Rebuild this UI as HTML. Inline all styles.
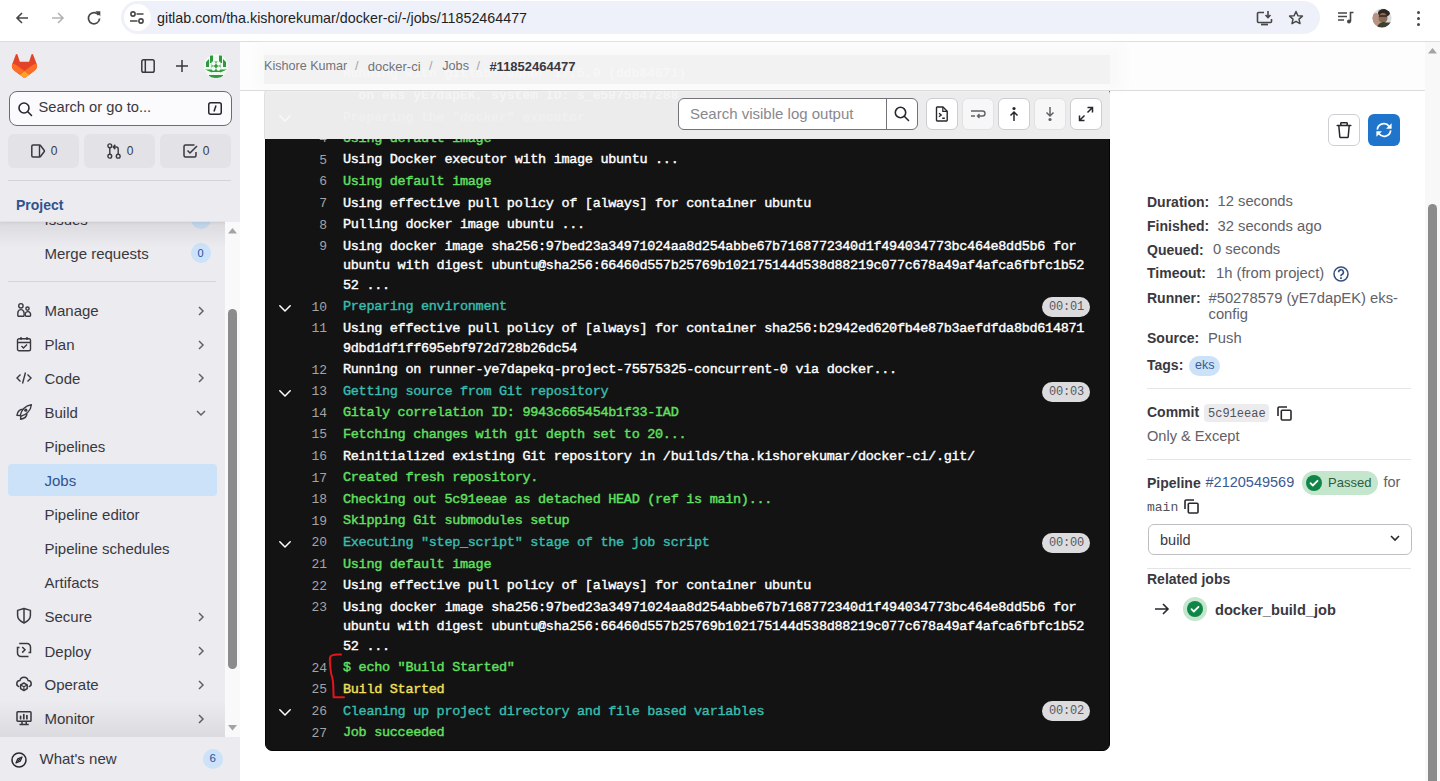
<!DOCTYPE html>
<html><head><meta charset="utf-8">
<style>
*{box-sizing:border-box;margin:0;padding:0}
html,body{width:1440px;height:781px;overflow:hidden;background:#fff;font-family:"Liberation Sans",sans-serif;color:#3a383f}
.a{position:absolute}
.t{position:absolute;white-space:pre}
svg{overflow:visible}
</style></head>
<body>
<div class="a" style="left:0px;top:0px;width:1440px;height:41px;background:#fff"></div>
<div class="a" style="left:0px;top:41px;width:1440px;height:1px;background:#dedede"></div>
<div class="a" style="left:121px;top:1px;width:1199px;height:33px;background:#eef1f9;border-radius:17px"></div>
<div class="a" style="left:124px;top:4px;width:27px;height:27px;background:#fff;border-radius:50%"></div>
<svg class="a" style="left:14px;top:10px;" width="16" height="16" viewBox="0 0 16 16"><path d="M14 8H3M8 3L3 8l5 5" fill="none" stroke="#474747" stroke-width="1.6"/></svg>
<svg class="a" style="left:50px;top:10px;" width="16" height="16" viewBox="0 0 16 16"><path d="M2 8h11M8 3l5 5-5 5" fill="none" stroke="#b4b4b4" stroke-width="1.6"/></svg>
<svg class="a" style="left:86px;top:10px;" width="16" height="16" viewBox="0 0 16 16"><path d="M12.6 5A5.6 5.6 0 1 0 13.6 8.5" fill="none" stroke="#474747" stroke-width="1.7"/><path d="M9.3 1.3h5v5z" fill="#474747"/></svg>
<svg class="a" style="left:130px;top:11px;" width="14" height="13" viewBox="0 0 14 13"><circle cx="3" cy="3" r="2.1" fill="none" stroke="#474747" stroke-width="1.6"/><path d="M6.5 3h7M0 10h7.5" stroke="#474747" stroke-width="1.6"/><circle cx="11" cy="10" r="2.1" fill="none" stroke="#474747" stroke-width="1.6"/></svg>
<div class="t " style="left:157px;top:11.40px;font-size:14.3px;line-height:14.3px;font-weight:400;color:#1f1f1f;font-family:'Liberation Sans',sans-serif;">gitlab.com/tha.kishorekumar/docker-ci/-/jobs/11852464477</div>
<svg class="a" style="left:1256px;top:11px;" width="17" height="15" viewBox="0 0 17 15"><path d="M8 1.5H2.5a1 1 0 0 0-1 1v8a1 1 0 0 0 1 1h12a1 1 0 0 0 1-1V8" fill="none" stroke="#474747" stroke-width="1.6"/><path d="M12 0v6M9.5 4l2.5 2.5L14.5 4" fill="none" stroke="#474747" stroke-width="1.6"/><path d="M5 13.5h7" stroke="#474747" stroke-width="1.8"/></svg>
<svg class="a" style="left:1288px;top:10px;" width="16" height="16" viewBox="0 0 16 16"><path d="M8 1.5l1.9 4.2 4.5.4-3.4 3 1 4.5L8 11.3l-4 2.3 1-4.5-3.4-3 4.5-.4z" fill="none" stroke="#474747" stroke-width="1.5" stroke-linejoin="round"/></svg>
<svg class="a" style="left:1338px;top:11px;" width="17" height="13" viewBox="0 0 17 13"><path d="M0 2h9M0 5.5h9M0 9h6" stroke="#474747" stroke-width="1.6"/><path d="M12.5 10.5V1.5h3" fill="none" stroke="#474747" stroke-width="1.6"/><circle cx="11" cy="10.5" r="2" fill="#474747"/></svg>
<svg class="a" style="left:1372px;top:8px;" width="20" height="20" viewBox="0 0 20 20"><defs><clipPath id="ca"><circle cx="10" cy="10" r="9.6"/></clipPath></defs><g clip-path="url(#ca)"><rect width="20" height="20" fill="#dcdcdc"/><ellipse cx="4" cy="13" rx="5" ry="8" fill="#b89383"/><ellipse cx="12" cy="5" rx="6" ry="4" fill="#2e2620"/><ellipse cx="11" cy="10" rx="4.5" ry="5" fill="#8a6a50"/><path d="M4 20Q8 13 12 14T20 14V20z" fill="#3b4030"/><path d="M7 8h8" stroke="#2e2620" stroke-width="1.3"/></g></svg>
<div class="a" style="left:1416.5px;top:10.5px;width:3.5px;height:3.5px;background:#474747;border-radius:50%"></div>
<div class="a" style="left:1416.5px;top:16.5px;width:3.5px;height:3.5px;background:#474747;border-radius:50%"></div>
<div class="a" style="left:1416.5px;top:22.5px;width:3.5px;height:3.5px;background:#474747;border-radius:50%"></div>
<div class="a" style="left:0px;top:42px;width:240px;height:739px;background:#ebebf0"></div>
<div class="a" style="left:0;top:222px;width:225px;height:515px;overflow:hidden">
<div class="t " style="left:44.5px;top:-10.20px;font-size:15px;line-height:15px;font-weight:400;color:#3a383f;font-family:'Liberation Sans',sans-serif;">Issues</div>
<div class="a" style="left:191px;top:-13px;width:20px;height:20px;background:#cbe2f9;border-radius:50%"></div>
<div class="t " style="left:44.5px;top:24.00px;font-size:15px;line-height:15px;font-weight:400;color:#3a383f;font-family:'Liberation Sans',sans-serif;">Merge requests</div>
<div class="a" style="left:191px;top:21px;width:20px;height:20px;background:#cbe2f9;border-radius:50%"></div>
<div class="t " style="left:197.5px;top:25.89px;font-size:11px;line-height:11px;font-weight:400;color:#28529d;font-family:'Liberation Sans',sans-serif;">0</div>
<div class="a" style="left:8px;top:59px;width:208px;height:1px;background:#d4d4d9"></div>
<div class="t " style="left:44.5px;top:81.10px;font-size:15px;line-height:15px;font-weight:400;color:#3a383f;font-family:'Liberation Sans',sans-serif;">Manage</div>
<svg class="a" style="left:198px;top:83.80000000000001px;" width="6" height="10" viewBox="0 0 6 10"><path d="M1 1l4 4-4 4" fill="none" stroke="#626168" stroke-width="1.5"/></svg>
<div class="t " style="left:44.5px;top:114.90px;font-size:15px;line-height:15px;font-weight:400;color:#3a383f;font-family:'Liberation Sans',sans-serif;">Plan</div>
<svg class="a" style="left:198px;top:117.60000000000002px;" width="6" height="10" viewBox="0 0 6 10"><path d="M1 1l4 4-4 4" fill="none" stroke="#626168" stroke-width="1.5"/></svg>
<div class="t " style="left:44.5px;top:148.70px;font-size:15px;line-height:15px;font-weight:400;color:#3a383f;font-family:'Liberation Sans',sans-serif;">Code</div>
<svg class="a" style="left:198px;top:151.39999999999998px;" width="6" height="10" viewBox="0 0 6 10"><path d="M1 1l4 4-4 4" fill="none" stroke="#626168" stroke-width="1.5"/></svg>
<div class="t " style="left:44.5px;top:182.50px;font-size:15px;line-height:15px;font-weight:400;color:#3a383f;font-family:'Liberation Sans',sans-serif;">Build</div>
<svg class="a" style="left:196px;top:188.2px;" width="10" height="6" viewBox="0 0 10 6"><path d="M1 1l4 4 4-4" fill="none" stroke="#626168" stroke-width="1.5"/></svg>
<svg class="a" style="left:16px;top:80px;" width="16" height="16" viewBox="0 0 16 16"><g fill="none" stroke="#3a383f" stroke-width="1.4"><circle cx="4.9" cy="3.8" r="2.2"/><path d="M1.8 13.2C1.6 10.5 2 7.6 4.9 7.6 7.8 7.6 8.3 10.5 8.1 13.2A1 1 0 0 1 7.1 14.3H2.8A1 1 0 0 1 1.8 13.2z"/><circle cx="11.5" cy="6.6" r="1.6"/><path d="M9.3 13.3C9.1 11.5 9.6 9.6 11.8 9.6 14 9.6 14.8 11.5 14.6 13.3A1 1 0 0 1 13.6 14.3H10.3A1 1 0 0 1 9.3 13.3z"/></g></svg>
<svg class="a" style="left:16px;top:114px;" width="16" height="16" viewBox="0 0 16 16"><rect x="1.5" y="2.8" width="13" height="12" rx="1.5" fill="none" stroke="#3a383f" stroke-width="1.4"/><path d="M1.5 6.5h13M5 1v3M11 1v3M5.5 10l2 2 3.5-3.5" fill="none" stroke="#3a383f" stroke-width="1.4"/></svg>
<svg class="a" style="left:16px;top:148px;" width="16" height="16" viewBox="0 0 16 16"><path d="M4.5 4.5L1 8l3.5 3.5M11.5 4.5L15 8l-3.5 3.5M9.5 2.5l-3 11" fill="none" stroke="#3a383f" stroke-width="1.4"/></svg>
<svg class="a" style="left:16px;top:182px;" width="16" height="16" viewBox="0 0 16 16"><g fill="none" stroke="#3a383f" stroke-width="1.4" stroke-linejoin="round"><path d="M4.2 11.6C5.2 6 9.6 1.4 15.4 0.7 14.8 6.4 10.4 11 4.8 12.2z"/><path d="M6.8 5.2C3.8 5.2 1.6 7.4 0.9 11.3L4.2 11.6"/><path d="M4.8 12.2L4.6 15.2C8.6 14.8 10.8 12.6 11 9.4"/></g><circle cx="9.8" cy="6.2" r="1.6" fill="#3a383f"/></svg>
<div class="t " style="left:44.5px;top:217.20px;font-size:15px;line-height:15px;font-weight:400;color:#3a383f;font-family:'Liberation Sans',sans-serif;">Pipelines</div>
<div class="a" style="left:8px;top:242px;width:209px;height:31.5px;background:#cbe2f9;border-radius:4px"></div>
<div class="t " style="left:44.5px;top:251.10px;font-size:15px;line-height:15px;font-weight:400;color:#30538f;font-family:'Liberation Sans',sans-serif;">Jobs</div>
<div class="t " style="left:44.5px;top:285.20px;font-size:15px;line-height:15px;font-weight:400;color:#3a383f;font-family:'Liberation Sans',sans-serif;">Pipeline editor</div>
<div class="t " style="left:44.5px;top:319.10px;font-size:15px;line-height:15px;font-weight:400;color:#3a383f;font-family:'Liberation Sans',sans-serif;">Pipeline schedules</div>
<div class="t " style="left:44.5px;top:352.70px;font-size:15px;line-height:15px;font-weight:400;color:#3a383f;font-family:'Liberation Sans',sans-serif;">Artifacts</div>
<div class="t " style="left:44.5px;top:387.30px;font-size:15px;line-height:15px;font-weight:400;color:#3a383f;font-family:'Liberation Sans',sans-serif;">Secure</div>
<svg class="a" style="left:198px;top:390px;" width="6" height="10" viewBox="0 0 6 10"><path d="M1 1l4 4-4 4" fill="none" stroke="#626168" stroke-width="1.5"/></svg>
<div class="t " style="left:44.5px;top:421.60px;font-size:15px;line-height:15px;font-weight:400;color:#3a383f;font-family:'Liberation Sans',sans-serif;">Deploy</div>
<svg class="a" style="left:198px;top:424.29999999999995px;" width="6" height="10" viewBox="0 0 6 10"><path d="M1 1l4 4-4 4" fill="none" stroke="#626168" stroke-width="1.5"/></svg>
<div class="t " style="left:44.5px;top:455.20px;font-size:15px;line-height:15px;font-weight:400;color:#3a383f;font-family:'Liberation Sans',sans-serif;">Operate</div>
<svg class="a" style="left:198px;top:457.9px;" width="6" height="10" viewBox="0 0 6 10"><path d="M1 1l4 4-4 4" fill="none" stroke="#626168" stroke-width="1.5"/></svg>
<div class="t " style="left:44.5px;top:489.30px;font-size:15px;line-height:15px;font-weight:400;color:#3a383f;font-family:'Liberation Sans',sans-serif;">Monitor</div>
<svg class="a" style="left:198px;top:492px;" width="6" height="10" viewBox="0 0 6 10"><path d="M1 1l4 4-4 4" fill="none" stroke="#626168" stroke-width="1.5"/></svg>
<svg class="a" style="left:16px;top:385px;" width="16" height="16" viewBox="0 0 16 16"><path d="M8 1.5L1.6 3.4V8.6C1.6 11.6 4.4 14.4 8 16 11.6 14.4 14.4 11.6 14.4 8.6V3.4z" fill="none" stroke="#3a383f" stroke-width="1.5" stroke-linejoin="round"/><path d="M8 1.8v14" stroke="#3a383f" stroke-width="1.5"/></svg>
<svg class="a" style="left:16px;top:420px;" width="16" height="16" viewBox="0 0 16 16"><path d="M3.2 1.5H11A3.5 3.5 0 0 1 14.5 5V10.5H12.5M3.5 5.5H1.5V11A3.5 3.5 0 0 0 5 14.5H12.5" fill="none" stroke="#3a383f" stroke-width="1.5"/><path d="M6.2 5L9 7.8 6.2 10.6" fill="none" stroke="#3a383f" stroke-width="1.5"/></svg>
<svg class="a" style="left:16px;top:454px;" width="16" height="16" viewBox="0 0 16 16"><path d="M2.8 10.6A3.1 3.1 0 0 1 3.9 4.6 4.2 4.2 0 0 1 12.1 4.6 3.1 3.1 0 0 1 13.2 10.6" fill="none" stroke="#3a383f" stroke-width="1.5" stroke-linecap="round"/><path d="M7.9 7L11.2 8.9V12.6L7.9 14.5 4.6 12.6V8.9z" fill="none" stroke="#3a383f" stroke-width="1.5" stroke-linejoin="round"/><path d="M7.9 10.8V14.3M7.9 10.8L4.8 9M7.9 10.8L11 9" fill="none" stroke="#3a383f" stroke-width="1.2"/></svg>
<svg class="a" style="left:16px;top:488px;" width="16" height="16" viewBox="0 0 16 16"><rect x="1" y="1.7" width="14" height="9.6" rx="0.8" fill="none" stroke="#3a383f" stroke-width="1.5"/><path d="M6 11.5v2.6M10.2 11.5v2.6M3.5 14.6h9.2" fill="none" stroke="#3a383f" stroke-width="1.5"/><path d="M4.6 6.3v2.4M7.8 4.7v4M10.9 5.6v3.1" stroke="#3a383f" stroke-width="1.7" stroke-linecap="round"/></svg>
<div class="a" style="left:0px;top:0px;width:225px;height:26px;background:linear-gradient(to bottom,rgba(0,0,0,0.075),rgba(0,0,0,0))"></div>
<div class="a" style="left:0px;top:478px;width:225px;height:37px;background:linear-gradient(to bottom,rgba(0,0,0,0),rgba(0,0,0,0.07))"></div>
</div>
<div class="a" style="left:0px;top:42px;width:240px;height:180px;background:#ebebf0;box-shadow:0 1px 3px rgba(0,0,0,0.06)"></div>
<div class="a" style="left:0px;top:221px;width:225px;height:1px;background:rgba(0,0,0,0.04)"></div>
<svg class="a" style="left:12px;top:54px;" width="25" height="24" viewBox="0 0 25 24"><path d="m24.507 9.5-.034-.09L21.082.562a.896.896 0 0 0-1.694.091l-2.29 7.01H7.825L5.535.653a.898.898 0 0 0-1.694-.09L.451 9.411.416 9.5a6.297 6.297 0 0 0 2.09 7.278l.012.01.03.022 5.16 3.867 2.56 1.935 1.554 1.176a1.051 1.051 0 0 0 1.268 0l1.555-1.176 2.56-1.935 5.197-3.89.014-.01A6.297 6.297 0 0 0 24.507 9.5Z" fill="#E24329"/><path d="m24.507 9.5-.034-.09a11.44 11.44 0 0 0-4.56 2.051l-7.447 5.632 4.742 3.584 5.197-3.89.014-.01A6.297 6.297 0 0 0 24.507 9.5Z" fill="#FC6D26"/><path d="m7.707 20.677 2.56 1.935 1.555 1.176a1.051 1.051 0 0 0 1.268 0l1.555-1.176 2.56-1.935-4.743-3.584-4.755 3.584Z" fill="#FCA326"/><path d="M5.01 11.461a11.43 11.43 0 0 0-4.56-2.05L.416 9.5a6.297 6.297 0 0 0 2.09 7.278l.012.01.03.022 5.16 3.867 4.745-3.584-7.444-5.632Z" fill="#FC6D26"/></svg>
<svg class="a" style="left:141px;top:59px;" width="14" height="14" viewBox="0 0 14 14"><rect x="0.8" y="0.8" width="12.4" height="12.4" rx="1.8" fill="none" stroke="#3a383f" stroke-width="1.5"/><path d="M4.3 1v12" stroke="#3a383f" stroke-width="1.5"/></svg>
<svg class="a" style="left:176px;top:60px;" width="12" height="12" viewBox="0 0 12 12"><path d="M6 0v12M0 6h12" stroke="#3a383f" stroke-width="1.5"/></svg>
<svg class="a" style="left:204px;top:54px;" width="24" height="24" viewBox="0 0 24 24"><defs><clipPath id="av"><circle cx="12" cy="12" r="12"/></clipPath></defs><g clip-path="url(#av)"><rect width="24" height="24" fill="#f1faf0"/><g fill="#2e9a3f"><path d="M6 1.5h3v7.5H6zM15 1.5h3v7.5h-3zM2 13V8l3-3v8zM22 13V8l-3-3v8zM9 9h6v6H9zM1 15.5h7v3zM23 15.5h-7v3zM8 15h8v3H8zM5 21h14v3H5z"/></g><g fill="#f1faf0"><circle cx="12" cy="12" r="0"/></g><path d="M7.5 7.5h9v9h-9z" fill="#2e9a3f"/><circle cx="9.5" cy="9.5" r="2.2" fill="#f1faf0"/><circle cx="14.5" cy="9.5" r="2.2" fill="#f1faf0"/><circle cx="9.5" cy="14.5" r="2.2" fill="#f1faf0"/><circle cx="14.5" cy="14.5" r="2.2" fill="#f1faf0"/><circle cx="12" cy="12" r="1.6" fill="#2e9a3f"/></g></svg>
<div class="a" style="left:8.5px;top:90.5px;width:223px;height:35px;background:#fbfafd;border:1px solid #6e6c73;border-radius:8px"></div>
<svg class="a" style="left:18px;top:102px;" width="14" height="14" viewBox="0 0 14 14"><circle cx="6" cy="6" r="5" fill="none" stroke="#28272d" stroke-width="1.6"/><path d="M9.8 9.8L13.5 13.5" stroke="#28272d" stroke-width="1.6" stroke-linecap="round"/></svg>
<div class="t " style="left:38.5px;top:100.36px;font-size:14.7px;line-height:14.7px;font-weight:400;color:#3a383f;font-family:'Liberation Sans',sans-serif;">Search or go to...</div>
<svg class="a" style="left:208px;top:101.5px;" width="14" height="13" viewBox="0 0 14 13"><rect x="0.75" y="0.75" width="12.5" height="11.5" rx="2" fill="none" stroke="#28272d" stroke-width="1.5"/><path d="M8 3.5L6 9.5" stroke="#28272d" stroke-width="1.5"/></svg>
<div class="a" style="left:8px;top:134px;width:71px;height:33.5px;background:#e2e2e7;border-radius:6px"></div>
<div class="a" style="left:84px;top:134px;width:71px;height:33.5px;background:#e2e2e7;border-radius:6px"></div>
<div class="a" style="left:160px;top:134px;width:71px;height:33.5px;background:#e2e2e7;border-radius:6px"></div>
<svg class="a" style="left:31px;top:144px;" width="14" height="14" viewBox="0 0 14 14"><path d="M2 1h6.5a1.2 1.2 0 0 1 1 .5L13.3 6.5a1 1 0 0 1 0 1L9.5 12.5a1.2 1.2 0 0 1-1 .5H2A1.2 1.2 0 0 1 .8 11.8V2.2A1.2 1.2 0 0 1 2 1z" fill="none" stroke="#3a383f" stroke-width="1.5" stroke-linejoin="round"/><path d="M8.5 1.3v11.4" stroke="#3a383f" stroke-width="1.4"/></svg>
<div class="t " style="left:50.8px;top:144.54px;font-size:12px;line-height:12px;font-weight:400;color:#3a383f;font-family:'Liberation Sans',sans-serif;">0</div>
<svg class="a" style="left:107px;top:143px;" width="14" height="16" viewBox="0 0 14 16"><circle cx="2.8" cy="2.8" r="1.9" fill="none" stroke="#3a383f" stroke-width="1.4"/><circle cx="2.8" cy="13.2" r="1.9" fill="none" stroke="#3a383f" stroke-width="1.4"/><circle cx="11.2" cy="13.2" r="1.9" fill="none" stroke="#3a383f" stroke-width="1.4"/><path d="M2.8 4.7v6.6M11.2 11.3V6a2 2 0 0 0-2-2H6.5M8.3 1.8L6.2 4l2.1 2.2" fill="none" stroke="#3a383f" stroke-width="1.4"/></svg>
<div class="t " style="left:126.8px;top:144.54px;font-size:12px;line-height:12px;font-weight:400;color:#3a383f;font-family:'Liberation Sans',sans-serif;">0</div>
<svg class="a" style="left:183px;top:144px;" width="15" height="14" viewBox="0 0 15 14"><path d="M11.5 1H2.5A1.5 1.5 0 0 0 1 2.5v9A1.5 1.5 0 0 0 2.5 13h9a1.5 1.5 0 0 0 1.5-1.5V8" fill="none" stroke="#3a383f" stroke-width="1.5"/><path d="M4.5 6.5L7 9l7-7" fill="none" stroke="#3a383f" stroke-width="1.5"/></svg>
<div class="t " style="left:202.8px;top:144.54px;font-size:12px;line-height:12px;font-weight:400;color:#3a383f;font-family:'Liberation Sans',sans-serif;">0</div>
<div class="a" style="left:8px;top:180px;width:223px;height:1px;background:#d4d4d9"></div>
<div class="t " style="left:16px;top:197.75px;font-size:14px;line-height:14px;font-weight:700;color:#30538f;font-family:'Liberation Sans',sans-serif;">Project</div>
<div class="a" style="left:0px;top:737px;width:240px;height:44px;background:#ebebf0"></div>
<svg class="a" style="left:11px;top:752px;" width="16" height="16" viewBox="0 0 16 16"><circle cx="8" cy="8" r="7" fill="none" stroke="#28272d" stroke-width="1.5"/><path d="M11 5l-4.2 1.8L5 11l4.2-1.8z" fill="none" stroke="#28272d" stroke-width="1.3" stroke-linejoin="round"/><path d="M6.5 9.5l3-3" stroke="#28272d" stroke-width="1.2"/></svg>
<div class="t " style="left:39.5px;top:751.10px;font-size:15px;line-height:15px;font-weight:400;color:#3a383f;font-family:'Liberation Sans',sans-serif;">What&#x27;s new</div>
<div class="a" style="left:203px;top:749px;width:20px;height:20px;background:#cbe2f9;border-radius:50%"></div>
<div class="t " style="left:209.5px;top:753.27px;font-size:11.5px;line-height:11.5px;font-weight:400;color:#28529d;font-family:'Liberation Sans',sans-serif;">6</div>
<div class="a" style="left:240px;top:42px;width:1185px;height:739px;background:#fff"></div>
<div class="a" style="left:1425px;top:42px;width:15px;height:739px;background:#f8f8f8"></div>
<svg class="a" style="left:1428px;top:48px;" width="9" height="6" viewBox="0 0 9 6"><path d="M0 5.5L4.5 0 9 5.5z" fill="#a3a3a3"/></svg>
<div class="a" style="left:1428px;top:204px;width:9px;height:577px;background:#8b8b8b;border-radius:4.5px 4.5px 0 0"></div>
<div class="a" style="left:225px;top:222px;width:15px;height:515px;background:#f9f9f9"></div>
<svg class="a" style="left:228px;top:228px;" width="9" height="6" viewBox="0 0 9 6"><path d="M0 5.5L4.5 0 9 5.5z" fill="#a3a3a3"/></svg>
<svg class="a" style="left:228px;top:725px;" width="9" height="6" viewBox="0 0 9 6"><path d="M0 0L4.5 5.5 9 0z" fill="#a3a3a3"/></svg>
<div class="a" style="left:228px;top:309px;width:9px;height:360px;background:#8b8b8b;border-radius:4.5px"></div>
<div class="a" style="left:265px;top:42px;width:845px;height:709px;background:#131313;border:1px solid #050505;border-radius:0 0 7px 7px"></div>
<div class="t " style="left:319.2px;top:67.44px;font-size:13px;line-height:13px;font-weight:400;color:#a4a3a8;font-family:'Liberation Mono',monospace;">1</div>
<div class="t " style="left:343px;top:67.05px;font-size:13.5px;line-height:13.5px;font-weight:400;color:#ffffff;font-family:'Liberation Mono',monospace;letter-spacing:-0.3px;-webkit-text-stroke:0.4px #ffffff">Running with gitlab-runner 17.5.0 (ddb84671)</div>
<div class="t " style="left:319.2px;top:89.04px;font-size:13px;line-height:13px;font-weight:400;color:#a4a3a8;font-family:'Liberation Mono',monospace;">2</div>
<div class="t " style="left:343px;top:88.65px;font-size:13.5px;line-height:13.5px;font-weight:400;color:#ffffff;font-family:'Liberation Mono',monospace;letter-spacing:-0.3px;-webkit-text-stroke:0.4px #ffffff">  on eks yE7dapEK, system ID: s_e5975847288</div>
<div class="t " style="left:319.2px;top:110.64px;font-size:13px;line-height:13px;font-weight:400;color:#a4a3a8;font-family:'Liberation Mono',monospace;">3</div>
<div class="t " style="left:343px;top:110.25px;font-size:13.5px;line-height:13.5px;font-weight:400;color:#38bdae;font-family:'Liberation Mono',monospace;letter-spacing:-0.3px;-webkit-text-stroke:0.4px #38bdae">Preparing the &quot;docker&quot; executor</div>
<svg class="a" style="left:279px;top:115.1px;" width="12" height="7" viewBox="0 0 12 7"><path d="M0.8 0.8L6 6 11.2 0.8" fill="none" stroke="#fff" stroke-width="1.5" stroke-linecap="round" stroke-linejoin="round"/></svg>
<div class="a" style="left:1042px;top:107.1px;width:48px;height:20px;background:#dcdcde;border-radius:10px"></div>
<div class="t " style="left:1049px;top:111.10px;font-size:12px;line-height:12px;font-weight:400;color:#58575e;font-family:'Liberation Mono',monospace;letter-spacing:-0.2px">00:02</div>
<div class="t " style="left:319.2px;top:132.24px;font-size:13px;line-height:13px;font-weight:400;color:#a4a3a8;font-family:'Liberation Mono',monospace;">4</div>
<div class="t " style="left:343px;top:131.85px;font-size:13.5px;line-height:13.5px;font-weight:400;color:#62e060;font-family:'Liberation Mono',monospace;letter-spacing:-0.3px;-webkit-text-stroke:0.4px #62e060">Using default image</div>
<div class="t " style="left:319.2px;top:153.84px;font-size:13px;line-height:13px;font-weight:400;color:#a4a3a8;font-family:'Liberation Mono',monospace;">5</div>
<div class="t " style="left:343px;top:153.45px;font-size:13.5px;line-height:13.5px;font-weight:400;color:#ffffff;font-family:'Liberation Mono',monospace;letter-spacing:-0.3px;-webkit-text-stroke:0.4px #ffffff">Using Docker executor with image ubuntu ...</div>
<div class="t " style="left:319.2px;top:175.44px;font-size:13px;line-height:13px;font-weight:400;color:#a4a3a8;font-family:'Liberation Mono',monospace;">6</div>
<div class="t " style="left:343px;top:175.05px;font-size:13.5px;line-height:13.5px;font-weight:400;color:#62e060;font-family:'Liberation Mono',monospace;letter-spacing:-0.3px;-webkit-text-stroke:0.4px #62e060">Using default image</div>
<div class="t " style="left:319.2px;top:197.04px;font-size:13px;line-height:13px;font-weight:400;color:#a4a3a8;font-family:'Liberation Mono',monospace;">7</div>
<div class="t " style="left:343px;top:196.65px;font-size:13.5px;line-height:13.5px;font-weight:400;color:#ffffff;font-family:'Liberation Mono',monospace;letter-spacing:-0.3px;-webkit-text-stroke:0.4px #ffffff">Using effective pull policy of [always] for container ubuntu</div>
<div class="t " style="left:319.2px;top:218.64px;font-size:13px;line-height:13px;font-weight:400;color:#a4a3a8;font-family:'Liberation Mono',monospace;">8</div>
<div class="t " style="left:343px;top:218.25px;font-size:13.5px;line-height:13.5px;font-weight:400;color:#ffffff;font-family:'Liberation Mono',monospace;letter-spacing:-0.3px;-webkit-text-stroke:0.4px #ffffff">Pulling docker image ubuntu ...</div>
<div class="t " style="left:319.2px;top:240.24px;font-size:13px;line-height:13px;font-weight:400;color:#a4a3a8;font-family:'Liberation Mono',monospace;">9</div>
<div class="t " style="left:343px;top:239.85px;font-size:13.5px;line-height:13.5px;font-weight:400;color:#ffffff;font-family:'Liberation Mono',monospace;letter-spacing:-0.3px;-webkit-text-stroke:0.4px #ffffff">Using docker image sha256:97bed23a34971024aa8d254abbe67b7168772340d1f494034773bc464e8dd5b6 for</div>
<div class="t " style="left:343px;top:259.35px;font-size:13.5px;line-height:13.5px;font-weight:400;color:#ffffff;font-family:'Liberation Mono',monospace;letter-spacing:-0.3px;-webkit-text-stroke:0.4px #ffffff">ubuntu with digest ubuntu@sha256:66460d557b25769b102175144d538d88219c077c678a49af4afca6fbfc1b52</div>
<div class="t " style="left:343px;top:278.85px;font-size:13.5px;line-height:13.5px;font-weight:400;color:#ffffff;font-family:'Liberation Mono',monospace;letter-spacing:-0.3px;-webkit-text-stroke:0.4px #ffffff">52 ...</div>
<div class="t " style="left:311.4px;top:300.84px;font-size:13px;line-height:13px;font-weight:400;color:#a4a3a8;font-family:'Liberation Mono',monospace;">10</div>
<div class="t " style="left:343px;top:300.45px;font-size:13.5px;line-height:13.5px;font-weight:400;color:#38bdae;font-family:'Liberation Mono',monospace;letter-spacing:-0.3px;-webkit-text-stroke:0.4px #38bdae">Preparing environment</div>
<svg class="a" style="left:279px;top:305.3px;" width="12" height="7" viewBox="0 0 12 7"><path d="M0.8 0.8L6 6 11.2 0.8" fill="none" stroke="#fff" stroke-width="1.5" stroke-linecap="round" stroke-linejoin="round"/></svg>
<div class="a" style="left:1042px;top:297.3px;width:48px;height:20px;background:#dcdcde;border-radius:10px"></div>
<div class="t " style="left:1049px;top:301.30px;font-size:12px;line-height:12px;font-weight:400;color:#58575e;font-family:'Liberation Mono',monospace;letter-spacing:-0.2px">00:01</div>
<div class="t " style="left:311.4px;top:322.44px;font-size:13px;line-height:13px;font-weight:400;color:#a4a3a8;font-family:'Liberation Mono',monospace;">11</div>
<div class="t " style="left:343px;top:322.05px;font-size:13.5px;line-height:13.5px;font-weight:400;color:#ffffff;font-family:'Liberation Mono',monospace;letter-spacing:-0.3px;-webkit-text-stroke:0.4px #ffffff">Using effective pull policy of [always] for container sha256:b2942ed620fb4e87b3aefdfda8bd614871</div>
<div class="t " style="left:343px;top:341.55px;font-size:13.5px;line-height:13.5px;font-weight:400;color:#ffffff;font-family:'Liberation Mono',monospace;letter-spacing:-0.3px;-webkit-text-stroke:0.4px #ffffff">9dbd1df1ff695ebf972d728b26dc54</div>
<div class="t " style="left:311.4px;top:363.54px;font-size:13px;line-height:13px;font-weight:400;color:#a4a3a8;font-family:'Liberation Mono',monospace;">12</div>
<div class="t " style="left:343px;top:363.15px;font-size:13.5px;line-height:13.5px;font-weight:400;color:#ffffff;font-family:'Liberation Mono',monospace;letter-spacing:-0.3px;-webkit-text-stroke:0.4px #ffffff">Running on runner-ye7dapekq-project-75575325-concurrent-0 via docker...</div>
<div class="t " style="left:311.4px;top:385.14px;font-size:13px;line-height:13px;font-weight:400;color:#a4a3a8;font-family:'Liberation Mono',monospace;">13</div>
<div class="t " style="left:343px;top:384.75px;font-size:13.5px;line-height:13.5px;font-weight:400;color:#38bdae;font-family:'Liberation Mono',monospace;letter-spacing:-0.3px;-webkit-text-stroke:0.4px #38bdae">Getting source from Git repository</div>
<svg class="a" style="left:279px;top:389.6px;" width="12" height="7" viewBox="0 0 12 7"><path d="M0.8 0.8L6 6 11.2 0.8" fill="none" stroke="#fff" stroke-width="1.5" stroke-linecap="round" stroke-linejoin="round"/></svg>
<div class="a" style="left:1042px;top:381.6px;width:48px;height:20px;background:#dcdcde;border-radius:10px"></div>
<div class="t " style="left:1049px;top:385.60px;font-size:12px;line-height:12px;font-weight:400;color:#58575e;font-family:'Liberation Mono',monospace;letter-spacing:-0.2px">00:03</div>
<div class="t " style="left:311.4px;top:406.74px;font-size:13px;line-height:13px;font-weight:400;color:#a4a3a8;font-family:'Liberation Mono',monospace;">14</div>
<div class="t " style="left:343px;top:406.35px;font-size:13.5px;line-height:13.5px;font-weight:400;color:#62e060;font-family:'Liberation Mono',monospace;letter-spacing:-0.3px;-webkit-text-stroke:0.4px #62e060">Gitaly correlation ID: 9943c665454b1f33-IAD</div>
<div class="t " style="left:311.4px;top:428.34px;font-size:13px;line-height:13px;font-weight:400;color:#a4a3a8;font-family:'Liberation Mono',monospace;">15</div>
<div class="t " style="left:343px;top:427.95px;font-size:13.5px;line-height:13.5px;font-weight:400;color:#62e060;font-family:'Liberation Mono',monospace;letter-spacing:-0.3px;-webkit-text-stroke:0.4px #62e060">Fetching changes with git depth set to 20...</div>
<div class="t " style="left:311.4px;top:449.94px;font-size:13px;line-height:13px;font-weight:400;color:#a4a3a8;font-family:'Liberation Mono',monospace;">16</div>
<div class="t " style="left:343px;top:449.55px;font-size:13.5px;line-height:13.5px;font-weight:400;color:#ffffff;font-family:'Liberation Mono',monospace;letter-spacing:-0.3px;-webkit-text-stroke:0.4px #ffffff">Reinitialized existing Git repository in /builds/tha.kishorekumar/docker-ci/.git/</div>
<div class="t " style="left:311.4px;top:471.54px;font-size:13px;line-height:13px;font-weight:400;color:#a4a3a8;font-family:'Liberation Mono',monospace;">17</div>
<div class="t " style="left:343px;top:471.15px;font-size:13.5px;line-height:13.5px;font-weight:400;color:#62e060;font-family:'Liberation Mono',monospace;letter-spacing:-0.3px;-webkit-text-stroke:0.4px #62e060">Created fresh repository.</div>
<div class="t " style="left:311.4px;top:493.14px;font-size:13px;line-height:13px;font-weight:400;color:#a4a3a8;font-family:'Liberation Mono',monospace;">18</div>
<div class="t " style="left:343px;top:492.75px;font-size:13.5px;line-height:13.5px;font-weight:400;color:#62e060;font-family:'Liberation Mono',monospace;letter-spacing:-0.3px;-webkit-text-stroke:0.4px #62e060">Checking out 5c91eeae as detached HEAD (ref is main)...</div>
<div class="t " style="left:311.4px;top:514.74px;font-size:13px;line-height:13px;font-weight:400;color:#a4a3a8;font-family:'Liberation Mono',monospace;">19</div>
<div class="t " style="left:343px;top:514.35px;font-size:13.5px;line-height:13.5px;font-weight:400;color:#62e060;font-family:'Liberation Mono',monospace;letter-spacing:-0.3px;-webkit-text-stroke:0.4px #62e060">Skipping Git submodules setup</div>
<div class="t " style="left:311.4px;top:536.34px;font-size:13px;line-height:13px;font-weight:400;color:#a4a3a8;font-family:'Liberation Mono',monospace;">20</div>
<div class="t " style="left:343px;top:535.95px;font-size:13.5px;line-height:13.5px;font-weight:400;color:#38bdae;font-family:'Liberation Mono',monospace;letter-spacing:-0.3px;-webkit-text-stroke:0.4px #38bdae">Executing &quot;step_script&quot; stage of the job script</div>
<svg class="a" style="left:279px;top:540.8px;" width="12" height="7" viewBox="0 0 12 7"><path d="M0.8 0.8L6 6 11.2 0.8" fill="none" stroke="#fff" stroke-width="1.5" stroke-linecap="round" stroke-linejoin="round"/></svg>
<div class="a" style="left:1042px;top:532.8px;width:48px;height:20px;background:#dcdcde;border-radius:10px"></div>
<div class="t " style="left:1049px;top:536.80px;font-size:12px;line-height:12px;font-weight:400;color:#58575e;font-family:'Liberation Mono',monospace;letter-spacing:-0.2px">00:00</div>
<div class="t " style="left:311.4px;top:557.94px;font-size:13px;line-height:13px;font-weight:400;color:#a4a3a8;font-family:'Liberation Mono',monospace;">21</div>
<div class="t " style="left:343px;top:557.55px;font-size:13.5px;line-height:13.5px;font-weight:400;color:#62e060;font-family:'Liberation Mono',monospace;letter-spacing:-0.3px;-webkit-text-stroke:0.4px #62e060">Using default image</div>
<div class="t " style="left:311.4px;top:579.54px;font-size:13px;line-height:13px;font-weight:400;color:#a4a3a8;font-family:'Liberation Mono',monospace;">22</div>
<div class="t " style="left:343px;top:579.15px;font-size:13.5px;line-height:13.5px;font-weight:400;color:#ffffff;font-family:'Liberation Mono',monospace;letter-spacing:-0.3px;-webkit-text-stroke:0.4px #ffffff">Using effective pull policy of [always] for container ubuntu</div>
<div class="t " style="left:311.4px;top:601.14px;font-size:13px;line-height:13px;font-weight:400;color:#a4a3a8;font-family:'Liberation Mono',monospace;">23</div>
<div class="t " style="left:343px;top:600.75px;font-size:13.5px;line-height:13.5px;font-weight:400;color:#ffffff;font-family:'Liberation Mono',monospace;letter-spacing:-0.3px;-webkit-text-stroke:0.4px #ffffff">Using docker image sha256:97bed23a34971024aa8d254abbe67b7168772340d1f494034773bc464e8dd5b6 for</div>
<div class="t " style="left:343px;top:620.25px;font-size:13.5px;line-height:13.5px;font-weight:400;color:#ffffff;font-family:'Liberation Mono',monospace;letter-spacing:-0.3px;-webkit-text-stroke:0.4px #ffffff">ubuntu with digest ubuntu@sha256:66460d557b25769b102175144d538d88219c077c678a49af4afca6fbfc1b52</div>
<div class="t " style="left:343px;top:639.75px;font-size:13.5px;line-height:13.5px;font-weight:400;color:#ffffff;font-family:'Liberation Mono',monospace;letter-spacing:-0.3px;-webkit-text-stroke:0.4px #ffffff">52 ...</div>
<div class="t " style="left:311.4px;top:661.74px;font-size:13px;line-height:13px;font-weight:400;color:#a4a3a8;font-family:'Liberation Mono',monospace;">24</div>
<div class="t " style="left:343px;top:661.35px;font-size:13.5px;line-height:13.5px;font-weight:400;color:#62e060;font-family:'Liberation Mono',monospace;letter-spacing:-0.3px;-webkit-text-stroke:0.4px #62e060">$ echo &quot;Build Started&quot;</div>
<div class="t " style="left:311.4px;top:683.34px;font-size:13px;line-height:13px;font-weight:400;color:#a4a3a8;font-family:'Liberation Mono',monospace;">25</div>
<div class="t " style="left:343px;top:682.95px;font-size:13.5px;line-height:13.5px;font-weight:400;color:#f1e05a;font-family:'Liberation Mono',monospace;letter-spacing:-0.3px;-webkit-text-stroke:0.4px #f1e05a">Build Started</div>
<div class="t " style="left:311.4px;top:704.94px;font-size:13px;line-height:13px;font-weight:400;color:#a4a3a8;font-family:'Liberation Mono',monospace;">26</div>
<div class="t " style="left:343px;top:704.55px;font-size:13.5px;line-height:13.5px;font-weight:400;color:#38bdae;font-family:'Liberation Mono',monospace;letter-spacing:-0.3px;-webkit-text-stroke:0.4px #38bdae">Cleaning up project directory and file based variables</div>
<svg class="a" style="left:279px;top:709.4px;" width="12" height="7" viewBox="0 0 12 7"><path d="M0.8 0.8L6 6 11.2 0.8" fill="none" stroke="#fff" stroke-width="1.5" stroke-linecap="round" stroke-linejoin="round"/></svg>
<div class="a" style="left:1042px;top:701.4px;width:48px;height:20px;background:#dcdcde;border-radius:10px"></div>
<div class="t " style="left:1049px;top:705.40px;font-size:12px;line-height:12px;font-weight:400;color:#58575e;font-family:'Liberation Mono',monospace;letter-spacing:-0.2px">00:02</div>
<div class="t " style="left:311.4px;top:726.54px;font-size:13px;line-height:13px;font-weight:400;color:#a4a3a8;font-family:'Liberation Mono',monospace;">27</div>
<div class="t " style="left:343px;top:726.15px;font-size:13.5px;line-height:13.5px;font-weight:400;color:#62e060;font-family:'Liberation Mono',monospace;letter-spacing:-0.3px;-webkit-text-stroke:0.4px #62e060">Job succeeded</div>
<div class="a" style="left:264px;top:90px;width:846px;height:49px;background:#ececec;border-left:1px solid #e0e0e0;border-radius:4px 4px 0 0"></div>
<div class="t " style="left:358.6px;top:89.04px;font-size:13px;line-height:13px;font-weight:700;color:#f4f4f4;font-family:'Liberation Mono',monospace;filter:blur(0.6px)">on eks yE7dapEK, system ID: s_e5975847288</div>
<svg class="a" style="left:279px;top:115.1px;" width="12" height="7" viewBox="0 0 12 7"><path d="M0.8 0.8L6 6 11.2 0.8" fill="none" stroke="#f8f8f8" stroke-width="1.5" stroke-linecap="round" stroke-linejoin="round"/></svg>
<div class="t " style="left:343px;top:110.64px;font-size:13px;line-height:13px;font-weight:700;color:#f0f0f0;font-family:'Liberation Mono',monospace;filter:blur(0.6px)">Preparing the &quot;docker&quot; executor</div>
<div class="a" style="left:240px;top:42px;width:1185px;height:48px;background:#fdfdfd"></div>
<div class="a" style="left:258px;top:46px;width:866px;height:42px;background:#f9f9f9;filter:blur(4px)"></div>
<div class="a" style="left:264px;top:55px;width:846px;height:29px;background:#f2f2f2"></div>
<div class="t " style="left:343px;top:67.44px;font-size:13px;line-height:13px;font-weight:700;color:#f6f6f6;font-family:'Liberation Mono',monospace;filter:blur(0.6px)">Running with gitlab-runner 17.5.0 (ddb84671)</div>
<div class="a" style="left:240px;top:90px;width:1185px;height:1px;background:#dcdcde"></div>
<div class="t " style="left:264px;top:59.93px;font-size:12.6px;line-height:12.6px;font-weight:400;color:#737278;font-family:'Liberation Sans',sans-serif;">Kishore Kumar</div>
<div class="t " style="left:355px;top:59.93px;font-size:12.6px;line-height:12.6px;font-weight:400;color:#a4a3a8;font-family:'Liberation Sans',sans-serif;">/</div>
<div class="t " style="left:367.8px;top:59.60px;font-size:13px;line-height:13px;font-weight:400;color:#737278;font-family:'Liberation Sans',sans-serif;">docker-ci</div>
<div class="t " style="left:429px;top:59.93px;font-size:12.6px;line-height:12.6px;font-weight:400;color:#a4a3a8;font-family:'Liberation Sans',sans-serif;">/</div>
<div class="t " style="left:442.2px;top:59.85px;font-size:12.7px;line-height:12.7px;font-weight:400;color:#737278;font-family:'Liberation Sans',sans-serif;">Jobs</div>
<div class="t " style="left:476.5px;top:59.93px;font-size:12.6px;line-height:12.6px;font-weight:400;color:#a4a3a8;font-family:'Liberation Sans',sans-serif;">/</div>
<div class="t " style="left:489.4px;top:59.60px;font-size:13px;line-height:13px;font-weight:700;color:#3a383f;font-family:'Liberation Sans',sans-serif;">#11852464477</div>
<div class="a" style="left:678px;top:98px;width:240px;height:32px;background:#fff;border:1px solid #737278;border-radius:6px"></div>
<div class="a" style="left:886px;top:98px;width:1px;height:32px;background:#737278"></div>
<div class="t " style="left:690px;top:106.30px;font-size:15px;line-height:15px;font-weight:400;color:#89888d;font-family:'Liberation Sans',sans-serif;">Search visible log output</div>
<svg class="a" style="left:894px;top:106px;" width="16" height="16" viewBox="0 0 16 16"><circle cx="6.5" cy="6.5" r="5.2" fill="none" stroke="#28272d" stroke-width="1.6"/><path d="M10.5 10.5L14.5 14.5" stroke="#28272d" stroke-width="1.6" stroke-linecap="round"/></svg>
<div class="a" style="left:926px;top:98px;width:32px;height:32px;background:#fff;border:1px solid #cdcdd1;border-radius:6px"></div>
<div class="a" style="left:962px;top:98px;width:32px;height:32px;background:#f7f7f8;border:1px solid #e2e2e5;border-radius:6px"></div>
<div class="a" style="left:998px;top:98px;width:32px;height:32px;background:#fff;border:1px solid #cdcdd1;border-radius:6px"></div>
<div class="a" style="left:1034px;top:98px;width:32px;height:32px;background:#f7f7f8;border:1px solid #e2e2e5;border-radius:6px"></div>
<div class="a" style="left:1070px;top:98px;width:32px;height:32px;background:#fff;border:1px solid #cdcdd1;border-radius:6px"></div>
<svg class="a" style="left:934px;top:106px;" width="16" height="16" viewBox="0 0 16 16"><path d="M3.2 1h5.8l4.2 4.2v9.1a.7.7 0 0 1-.7.7H3.2a.7.7 0 0 1-.7-.7V1.7a.7.7 0 0 1 .7-.7z" fill="none" stroke="#28272d" stroke-width="1.4" stroke-linejoin="round"/><path d="M8.8 1.2v4.2h4.2" fill="none" stroke="#28272d" stroke-width="1.2"/><path d="M5 7.2l2.2 1.8L5 10.8M8.2 12.2h2.6" fill="none" stroke="#28272d" stroke-width="1.4"/></svg>
<svg class="a" style="left:970px;top:106px;" width="16" height="16" viewBox="0 0 16 16"><path d="M1 5h11.5a2.5 2.5 0 0 1 0 5H7.5M9.5 8L7.5 10l2 2M1 10h4" fill="none" stroke="#626168" stroke-width="1.4"/></svg>
<svg class="a" style="left:1006px;top:106px;" width="16" height="16" viewBox="0 0 16 16"><circle cx="8" cy="2.5" r="1.6" fill="#28272d"/><path d="M8 6v9M4.5 9.5L8 6l3.5 3.5" fill="none" stroke="#28272d" stroke-width="1.5"/></svg>
<svg class="a" style="left:1042px;top:106px;" width="16" height="16" viewBox="0 0 16 16"><circle cx="8" cy="13.5" r="1.6" fill="#626168"/><path d="M8 1v9M4.5 6.5L8 10l3.5-3.5" fill="none" stroke="#626168" stroke-width="1.5"/></svg>
<svg class="a" style="left:1078px;top:106px;" width="16" height="16" viewBox="0 0 16 16"><path d="M9.5 1.5h5v5M14.5 1.5l-5 5M6.5 14.5h-5v-5M1.5 14.5l5-5" fill="none" stroke="#28272d" stroke-width="1.5"/></svg>
<svg class="a" style="left:0;top:0" width="1440" height="781"><path d="M341 654.6C336 654.2 331 654.4 330 657.5 329.6 660 330.3 668 331.2 674 333.2 679 333.4 684 333.4 690 L333.6 697.3 L344 697.3" fill="none" stroke="#e8141c" stroke-width="2" stroke-linejoin="round" stroke-linecap="round"/></svg>
<div class="a" style="left:1328px;top:114px;width:32px;height:32px;background:#fff;border:1px solid #cfcfd3;border-radius:6px"></div>
<svg class="a" style="left:1336px;top:122px;" width="16" height="16" viewBox="0 0 16 16"><path d="M1.2 3.6h13.6" stroke="#28272d" stroke-width="1.5" stroke-linecap="round"/><path d="M4.8 3.6V1.3a.6.6 0 0 1 .6-.6h5.2a.6.6 0 0 1 .6.6v2.3" fill="none" stroke="#28272d" stroke-width="1.5"/><path d="M2.8 3.8l1 11a.8.8 0 0 0 .8.7h6.8a.8.8 0 0 0 .8-.7l1-11" fill="none" stroke="#28272d" stroke-width="1.5" stroke-linejoin="round"/></svg>
<div class="a" style="left:1368px;top:114px;width:32px;height:32px;background:#1f75cb;border-radius:6px"></div>
<svg class="a" style="left:1376px;top:122px;" width="16" height="16" viewBox="0 0 16 16"><path d="M1.3 7.6A6.6 6.6 0 0 1 13.2 4.4" fill="none" stroke="#fff" stroke-width="1.7"/><path d="M15.6 1.2v5.6H10z" fill="#fff"/><path d="M14.7 8.4A6.6 6.6 0 0 1 2.8 11.6" fill="none" stroke="#fff" stroke-width="1.7"/><path d="M0.4 14.8V9.2H6z" fill="#fff"/></svg>
<div class="t " style="left:1147px;top:194.75px;font-size:14px;line-height:14px;font-weight:700;color:#3a383f;font-family:'Liberation Sans',sans-serif;">Duration:</div>
<div class="t " style="left:1217.5px;top:194.11px;font-size:14.75px;line-height:14.75px;font-weight:400;color:#626168;font-family:'Liberation Sans',sans-serif;">12 seconds</div>
<div class="t " style="left:1147px;top:219.15px;font-size:14px;line-height:14px;font-weight:700;color:#3a383f;font-family:'Liberation Sans',sans-serif;">Finished:</div>
<div class="t " style="left:1217.5px;top:218.51px;font-size:14.75px;line-height:14.75px;font-weight:400;color:#626168;font-family:'Liberation Sans',sans-serif;">32 seconds ago</div>
<div class="t " style="left:1147px;top:242.85px;font-size:14px;line-height:14px;font-weight:700;color:#3a383f;font-family:'Liberation Sans',sans-serif;">Queued:</div>
<div class="t " style="left:1213px;top:242.21px;font-size:14.75px;line-height:14.75px;font-weight:400;color:#626168;font-family:'Liberation Sans',sans-serif;">0 seconds</div>
<div class="t " style="left:1147px;top:266.45px;font-size:14px;line-height:14px;font-weight:700;color:#3a383f;font-family:'Liberation Sans',sans-serif;">Timeout:</div>
<div class="t " style="left:1216px;top:265.81px;font-size:14.75px;line-height:14.75px;font-weight:400;color:#626168;font-family:'Liberation Sans',sans-serif;">1h (from project)</div>
<svg class="a" style="left:1333px;top:266px;" width="16" height="16" viewBox="0 0 16 16"><circle cx="8" cy="8" r="7" fill="none" stroke="#34507f" stroke-width="1.5"/><path d="M5.6 6.3a2.4 2.4 0 1 1 3.4 2.1c-.6.3-1 .7-1 1.3v.5" fill="none" stroke="#34507f" stroke-width="1.6"/><rect x="7.1" y="11.3" width="1.8" height="1.7" fill="#34507f"/></svg>
<div class="t " style="left:1147px;top:291.15px;font-size:14px;line-height:14px;font-weight:700;color:#3a383f;font-family:'Liberation Sans',sans-serif;">Runner:</div>
<div class="t " style="left:1208.5px;top:290.51px;font-size:14.75px;line-height:14.75px;font-weight:400;color:#626168;font-family:'Liberation Sans',sans-serif;">#50278579 (yE7dapEK) eks-</div>
<div class="t " style="left:1208.5px;top:306.51px;font-size:14.75px;line-height:14.75px;font-weight:400;color:#626168;font-family:'Liberation Sans',sans-serif;">config</div>
<div class="t " style="left:1147px;top:331.15px;font-size:14px;line-height:14px;font-weight:700;color:#3a383f;font-family:'Liberation Sans',sans-serif;">Source:</div>
<div class="t " style="left:1208px;top:330.51px;font-size:14.75px;line-height:14.75px;font-weight:400;color:#626168;font-family:'Liberation Sans',sans-serif;">Push</div>
<div class="t " style="left:1147px;top:357.55px;font-size:14px;line-height:14px;font-weight:700;color:#3a383f;font-family:'Liberation Sans',sans-serif;">Tags:</div>
<div class="a" style="left:1188.5px;top:356px;width:31px;height:19.5px;background:#cbe2f9;border-radius:10px"></div>
<div class="t " style="left:1195px;top:359.22px;font-size:12.5px;line-height:12.5px;font-weight:400;color:#3b5a92;font-family:'Liberation Sans',sans-serif;">eks</div>
<div class="a" style="left:1147px;top:388px;width:264px;height:1px;background:#e4e4e7"></div>
<div class="t " style="left:1147px;top:404.65px;font-size:14px;line-height:14px;font-weight:700;color:#3a383f;font-family:'Liberation Sans',sans-serif;">Commit</div>
<div class="a" style="left:1204px;top:404px;width:65px;height:18px;background:#ececef;border-radius:4px"></div>
<div class="t " style="left:1208px;top:407.80px;font-size:12px;line-height:12px;font-weight:400;color:#535158;font-family:'Liberation Mono',monospace;">5c91eeae</div>
<svg class="a" style="left:1277px;top:406px;" width="15" height="15" viewBox="0 0 15 15"><path d="M1 10V2.2A1.2 1.2 0 0 1 2.2 1H10" fill="none" stroke="#28272d" stroke-width="1.6"/><rect x="4.3" y="4.3" width="9.7" height="9.7" rx="1" fill="none" stroke="#28272d" stroke-width="1.6"/></svg>
<div class="t " style="left:1147px;top:428.64px;font-size:14.6px;line-height:14.6px;font-weight:400;color:#626168;font-family:'Liberation Sans',sans-serif;">Only &amp; Except</div>
<div class="a" style="left:1147px;top:458.5px;width:264px;height:1px;background:#e4e4e7"></div>
<div class="t " style="left:1147px;top:475.65px;font-size:14px;line-height:14px;font-weight:700;color:#3a383f;font-family:'Liberation Sans',sans-serif;">Pipeline</div>
<div class="t " style="left:1205.5px;top:475.23px;font-size:14.5px;line-height:14.5px;font-weight:400;color:#3b5a92;font-family:'Liberation Sans',sans-serif;">#2120549569</div>
<div class="a" style="left:1302px;top:471px;width:76px;height:23.5px;background:#c3e6cd;border-radius:12px"></div>
<svg class="a" style="left:1306px;top:475px;" width="16" height="16" viewBox="0 0 16 16"><circle cx="8" cy="8" r="8" fill="#108548"/><path d="M4.5 8.2l2.3 2.3 4.7-4.7" fill="none" stroke="#fff" stroke-width="1.8" stroke-linecap="round" stroke-linejoin="round"/></svg>
<div class="t " style="left:1328px;top:476.30px;font-size:13px;line-height:13px;font-weight:400;color:#2f5c3c;font-family:'Liberation Sans',sans-serif;">Passed</div>
<div class="t " style="left:1383.5px;top:475.23px;font-size:14.5px;line-height:14.5px;font-weight:400;color:#626168;font-family:'Liberation Sans',sans-serif;">for</div>
<div class="t " style="left:1147px;top:501.04px;font-size:13px;line-height:13px;font-weight:400;color:#535158;font-family:'Liberation Mono',monospace;">main</div>
<svg class="a" style="left:1184px;top:499px;" width="15" height="15" viewBox="0 0 15 15"><path d="M1 10V2.2A1.2 1.2 0 0 1 2.2 1H10" fill="none" stroke="#28272d" stroke-width="1.6"/><rect x="4.3" y="4.3" width="9.7" height="9.7" rx="1" fill="none" stroke="#28272d" stroke-width="1.6"/></svg>
<div class="a" style="left:1147.5px;top:523.5px;width:264px;height:31px;background:#fff;border:1px solid #bfbfc3;border-radius:6px"></div>
<div class="t " style="left:1160px;top:532.73px;font-size:14.5px;line-height:14.5px;font-weight:400;color:#3a383f;font-family:'Liberation Sans',sans-serif;">build</div>
<svg class="a" style="left:1390px;top:535px;" width="10" height="6" viewBox="0 0 10 6"><path d="M1 1l4 4 4-4" fill="none" stroke="#28272d" stroke-width="1.6"/></svg>
<div class="a" style="left:1147px;top:567.5px;width:264px;height:1px;background:#e4e4e7"></div>
<div class="t " style="left:1147px;top:572.15px;font-size:14px;line-height:14px;font-weight:700;color:#3a383f;font-family:'Liberation Sans',sans-serif;">Related jobs</div>
<svg class="a" style="left:1155px;top:603px;" width="15" height="12" viewBox="0 0 15 12"><path d="M0 6h13M8 1l5 5-5 5" fill="none" stroke="#28272d" stroke-width="1.6"/></svg>
<div class="a" style="left:1183px;top:597px;width:24px;height:24px;background:#c3e6cd;border-radius:50%"></div>
<svg class="a" style="left:1187px;top:601px;" width="16" height="16" viewBox="0 0 16 16"><circle cx="8" cy="8" r="8" fill="#108548"/><path d="M4.5 8.2l2.3 2.3 4.7-4.7" fill="none" stroke="#fff" stroke-width="1.8" stroke-linecap="round" stroke-linejoin="round"/></svg>
<div class="t " style="left:1215px;top:603.14px;font-size:14.6px;line-height:14.6px;font-weight:700;color:#3a383f;font-family:'Liberation Sans',sans-serif;">docker_build_job</div>
</body></html>
